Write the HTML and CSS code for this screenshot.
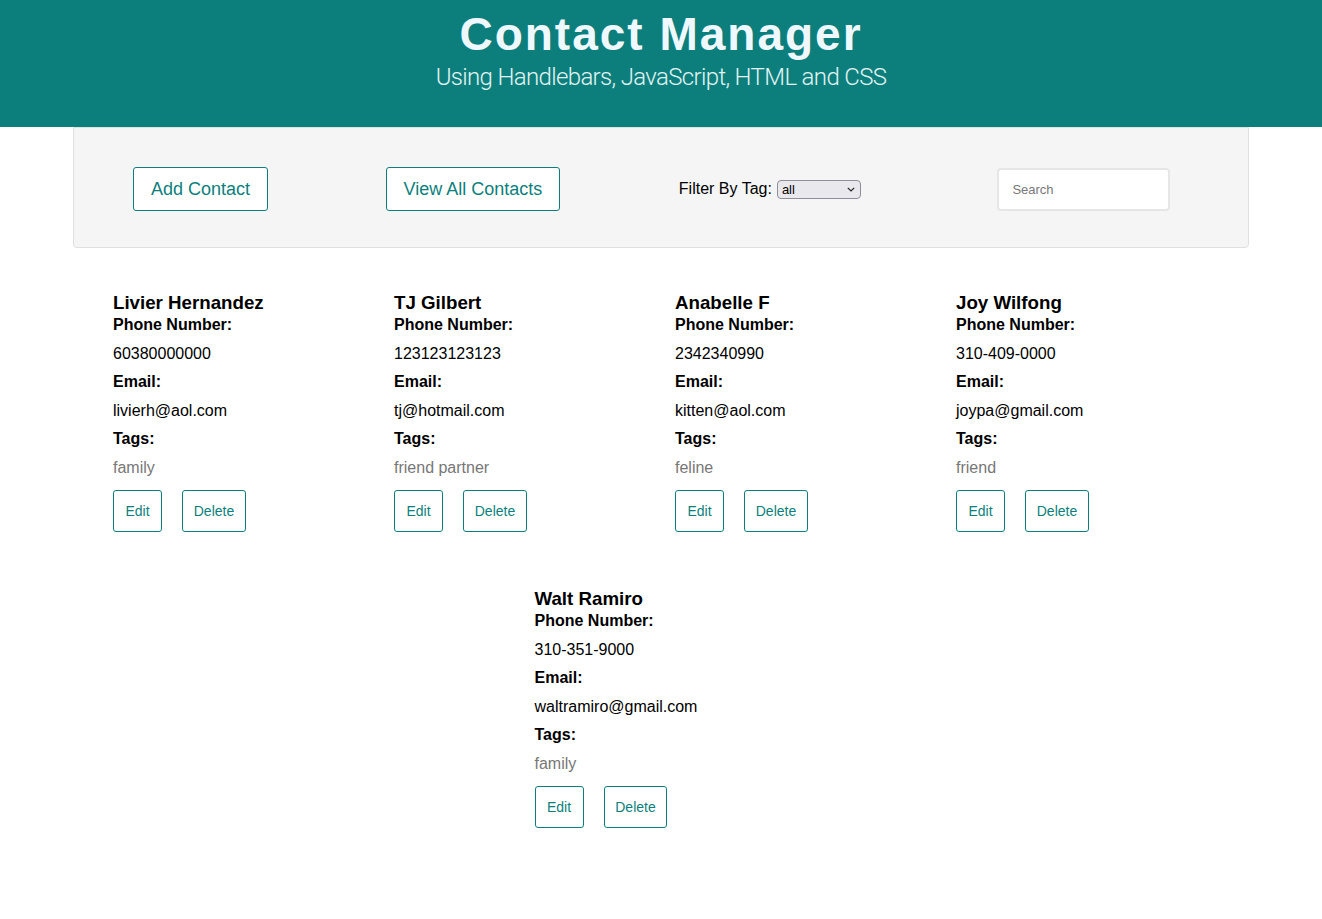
FILE: index.html
```html
<!DOCTYPE html>
<html lang="en">
<head>
<meta charset="utf-8">
<title>Contact Manager</title>
<link rel="stylesheet" href="styles.css">
</head>
<body>
<header class="site-header">
  <h1 class="title">Contact Manager</h1>
  <p class="subtitle">Using Handlebars, JavaScript, HTML and CSS</p>
</header>

<section class="toolbar">
  <button class="btn btn-large">Add Contact</button>
  <button class="btn btn-large">View All Contacts</button>
  <label class="filter">Filter By Tag:
    <span class="select-wrap">
      <select class="select"><option>all</option></select>
      <svg class="chevron" width="8" height="5" viewBox="0 0 8 5"><path d="M0.8 0.8 L4 4 L7.2 0.8" fill="none" stroke="#222" stroke-width="1.2"/></svg>
    </span>
  </label>
  <input class="search" type="text" placeholder="Search">
</section>

<main class="cards">
  <article class="card">
    <h3 class="name">Livier Hernandez</h3>
    <div class="label">Phone Number:</div>
    <div class="value">60380000000</div>
    <div class="label">Email:</div>
    <div class="value">livierh@aol.com</div>
    <div class="label">Tags:</div>
    <div class="value tags">family</div>
    <div class="actions"><button class="btn btn-small">Edit</button><button class="btn btn-small">Delete</button></div>
  </article>
  <article class="card">
    <h3 class="name">TJ Gilbert</h3>
    <div class="label">Phone Number:</div>
    <div class="value">123123123123</div>
    <div class="label">Email:</div>
    <div class="value">tj@hotmail.com</div>
    <div class="label">Tags:</div>
    <div class="value tags">friend partner</div>
    <div class="actions"><button class="btn btn-small">Edit</button><button class="btn btn-small">Delete</button></div>
  </article>
  <article class="card">
    <h3 class="name">Anabelle F</h3>
    <div class="label">Phone Number:</div>
    <div class="value">2342340990</div>
    <div class="label">Email:</div>
    <div class="value">kitten@aol.com</div>
    <div class="label">Tags:</div>
    <div class="value tags">feline</div>
    <div class="actions"><button class="btn btn-small">Edit</button><button class="btn btn-small">Delete</button></div>
  </article>
  <article class="card">
    <h3 class="name">Joy Wilfong</h3>
    <div class="label">Phone Number:</div>
    <div class="value">310-409-0000</div>
    <div class="label">Email:</div>
    <div class="value">joypa@gmail.com</div>
    <div class="label">Tags:</div>
    <div class="value tags">friend</div>
    <div class="actions"><button class="btn btn-small">Edit</button><button class="btn btn-small">Delete</button></div>
  </article>
  <article class="card">
    <h3 class="name">Walt Ramiro</h3>
    <div class="label">Phone Number:</div>
    <div class="value">310-351-9000</div>
    <div class="label">Email:</div>
    <div class="value">waltramiro@gmail.com</div>
    <div class="label">Tags:</div>
    <div class="value tags">family</div>
    <div class="actions"><button class="btn btn-small">Edit</button><button class="btn btn-small">Delete</button></div>
  </article>
</main>
</body>
</html>
```

FILE: styles.css
```css
* { box-sizing: border-box; }

body {
  margin: 0;
  font-family: "Liberation Sans", Arial, Helvetica, sans-serif;
  font-size: 16px;
  color: #000;
  background: #fff;
}

.site-header {
  height: 127px;
  background: #0c7f7d;
  text-align: center;
  padding-top: 11px;
}

.title {
  margin: 0;
  font-size: 46px;
  line-height: 46px;
  font-weight: 700;
  letter-spacing: 2px;
  color: #f0f8ff;
}

.subtitle {
  margin: 8px 0 0;
  font-family: Roboto, "Liberation Sans", sans-serif;
  font-weight: 300;
  font-size: 24px;
  line-height: 24px;
  letter-spacing: -0.65px;
  color: #e2f3f3;
}

.toolbar {
  width: 1176px;
  margin: 0 auto;
  background: #f5f5f5;
  border: 1px solid #e0e0e0;
  border-radius: 0 0 4px 4px;
  display: flex;
  align-items: center;
  gap: 117.5px;
  padding: 39px 0 36px 59px;
}

.toolbar > * { flex-shrink: 0; }

.btn {
  font-family: "Liberation Sans", Arial, sans-serif;
  background: #fff;
  color: #0c7f7d;
  border: 1px solid #0c7f7d;
  border-radius: 3px;
  cursor: pointer;
}

.btn-large {
  font-size: 18px;
  line-height: 20px;
  padding: 11px 17px;
}

.filter {
  margin-left: 1px;
  font-size: 16px;
  display: flex;
  align-items: center;
  gap: 5px;
}

.select-wrap {
  position: relative;
  display: inline-block;
}

.select {
  appearance: none;
  -webkit-appearance: none;
  width: 84px;
  height: 19px;
  font-family: "Liberation Sans", Arial, sans-serif;
  font-size: 13px;
  line-height: 15px;
  padding: 1px 4px;
  color: #000;
  background: #e9e9ed;
  border: 1px solid #8f8f9d;
  border-radius: 4px;
  display: block;
}

.chevron {
  position: absolute;
  right: 6px;
  top: 7px;
  pointer-events: none;
}

.search {
  margin-left: 19px;
  width: 173px;
  height: 43px;
  border: 2px solid #e6e6e6;
  border-radius: 4px;
  background: #fff;
  padding: 0 13px;
  font-family: "Liberation Sans", Arial, sans-serif;
  font-size: 13px;
  color: #000;
}

.search::placeholder { color: #777; }

.cards {
  width: 1176px;
  margin: 0 auto;
  padding-top: 47px;
  display: flex;
  flex-wrap: wrap;
  justify-content: center;
}

.card {
  width: 253px;
  margin: 0 14px 59px;
}

.name {
  margin: 0;
  font-size: 18.72px;
  line-height: 16px;
  font-weight: 700;
}

.label {
  font-weight: 700;
  line-height: 28.5px;
}

.value {
  line-height: 28.5px;
}

.tags { color: #777; }

.actions {
  display: flex;
  gap: 20px;
  margin-top: 8px;
}

.btn-small {
  font-size: 14px;
  line-height: 16px;
  min-width: 49px;
  text-align: center;
  padding: 12px 10.75px;
}
```
